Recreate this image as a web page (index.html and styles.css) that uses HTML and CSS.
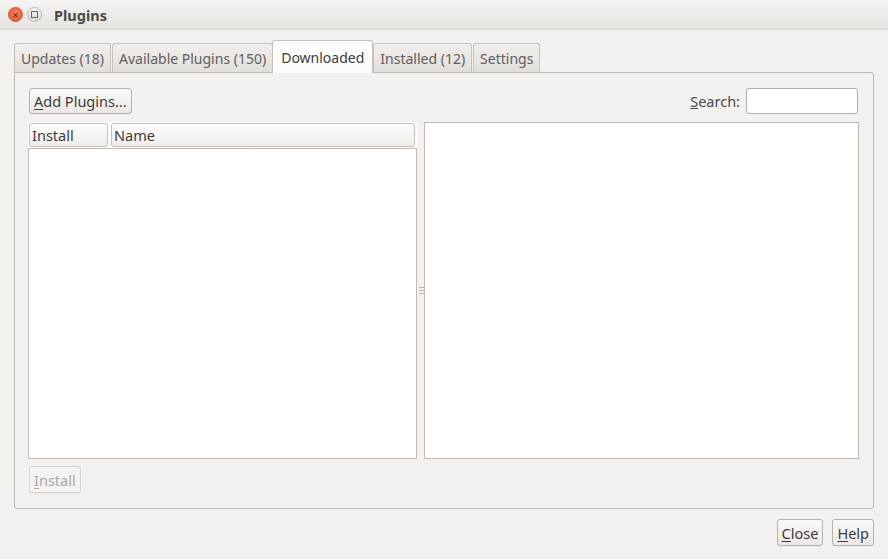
FILE: index.html
```html
<!DOCTYPE html>
<html lang="en">
<head>
    <meta charset="UTF-8">
    <title>Plugins</title>
    <link rel="stylesheet" href="styles.css">
</head>
<body>

    <div class="titlebar">
        <span class="wbtn wclose">&#215;</span>
        <span class="wbtn wmax"><i></i></span>
        <span class="wtitle">Plugins</span>
    </div>

    <div class="dialog">
        <div class="tabs">
            <div class="tab">Updates (18)</div>
            <div class="tab">Available Plugins (150)</div>
            <div class="tab active">Downloaded</div>
            <div class="tab">Installed (12)</div>
            <div class="tab">Settings</div>
        </div>

        <div class="panel">
            <div class="toolbar">
                <button class="btn"><u>A</u>dd Plugins...</button>
                <label class="search-label" for="search"><u>S</u>earch:</label>
                <input class="search" id="search" type="text">
            </div>

            <div class="panes">
                <div class="left-pane">
                    <div class="headers">
                        <div class="col col-install">Install</div>
                        <div class="col col-name">Name</div>
                    </div>
                    <div class="list"></div>
                </div>
                <div class="splitter"><span></span></div>
                <div class="right-pane"></div>
            </div>

            <div class="bottom">
                <button class="btn" disabled><u>I</u>nstall</button>
            </div>
        </div>

        <div class="actions">
            <button class="btn"><u>C</u>lose</button>
            <button class="btn"><u>H</u>elp</button>
        </div>
    </div>

</body>
</html>
```

FILE: styles.css
```css
body {
    margin: 0;
    width: 888px;
    height: 559px;
    overflow: hidden;
    background-color: #f2f1f0;
    font-family: "Noto Sans", "DejaVu Sans", sans-serif;
    font-size: 14.5px;
    color: #3c3c3c;
}

/* window title bar */
.titlebar {
    height: 30px;
    display: flex;
    align-items: center;
    background: linear-gradient(#f5f4f2, #e6e3e0);
    border-bottom: 1px solid #dcd8d3;
    box-sizing: border-box;
}
.wbtn {
    width: 15px;
    height: 15px;
    border-radius: 50%;
    display: flex;
    align-items: center;
    justify-content: center;
    box-sizing: border-box;
}
.wclose {
    margin-left: 8px;
    background: radial-gradient(circle at 50% 40%, #f5845c, #e2562a);
    border: 1px solid #c8532f;
    color: #5a2a1a;
    font-size: 11px;
    line-height: 1;
}
.wmax {
    margin-left: 4px;
    background: linear-gradient(#f6f5f3, #dcd9d5);
    border: 1px solid #bdb8b2;
}
.wmax i {
    width: 5px;
    height: 5px;
    border: 1px solid #6c6864;
}
.wtitle {
    margin-left: 12px;
    font-weight: bold;
    font-size: 14.5px;
    color: #4c4a47;
}

.dialog {
    padding: 10px 14px 0 14px;
}

/* notebook tabs */
.tabs {
    display: flex;
    align-items: flex-end;
    height: 32px;
    gap: 1px;
}
.tab {
    height: 29px;
    padding: 0 6px;
    display: flex;
    align-items: center;
    box-sizing: border-box;
    border: 1px solid #c9c1b8;
    border-bottom: none;
    border-radius: 3px 3px 0 0;
    background: linear-gradient(#f1efed, #e2deda);
    color: #5f5f5f;
    font-size: 14px;
}
.tab.active {
    height: 33px;
    margin: 0 -1px -1px -2px;
    padding: 0 8px;
    background: #fcfcfc;
    color: #3c3c3c;
    position: relative;
}

.panel {
    height: 437px;
    box-sizing: border-box;
    border: 1px solid #c3bbb1;
    border-radius: 0 3px 3px 3px;
    padding: 15px 14px 0 13px;
    display: flex;
    flex-direction: column;
}

.btn {
    font-family: inherit;
    font-size: 14.5px;
    color: #3c3c3c;
    height: 27px;
    padding: 0 4px;
    border: 1px solid #bab2a9;
    border-radius: 3px;
    background: linear-gradient(#fbfaf9, #ebe8e5);
    box-shadow: 0 1px 0 rgba(0, 0, 0, 0.04);
}
.btn u {
    text-decoration-thickness: 1px;
    text-underline-offset: 2px;
}
.btn:disabled {
    color: #a9a9a9;
    border-color: #d9d4ce;
    background: #f4f3f1;
}

.toolbar {
    display: flex;
    align-items: center;
    height: 26px;
}
.toolbar .btn {
    height: 26px;
    margin-left: 1px;
}
.search-label {
    margin-left: auto;
    margin-right: 6px;
    color: #4a4a4a;
}
.search {
    width: 112px;
    height: 26px;
    box-sizing: border-box;
    margin-right: 1px;
    border: 1px solid #b5aca2;
    border-radius: 3px;
    background: #fff;
}

.panes {
    display: flex;
    height: 337px;
    margin-top: 8px;
}
.left-pane {
    width: 390px;
    display: flex;
    flex-direction: column;
}
.headers {
    display: flex;
    gap: 3px;
    height: 26px;
    padding: 1px 3px 0 1px;
    box-sizing: border-box;
    background: #fbfbfb;
}
.col {
    height: 24px;
    box-sizing: border-box;
    padding-left: 2px;
    display: flex;
    align-items: center;
    border: 1px solid #c8c1b9;
    border-radius: 3px;
    background: linear-gradient(#fdfdfc, #efedeb);
}
.col-install {
    width: 79px;
}
.col-name {
    flex: 1;
}
.list {
    flex: 1;
    background: #fff;
    border: 1px solid #c3bbb1;
    margin-right: 1px;
}
.splitter {
    width: 6px;
    display: flex;
    align-items: center;
    justify-content: center;
}
/* three little grip lines */
.splitter span {
    width: 5px;
    height: 7px;
    background: repeating-linear-gradient(#bdb6ae 0 1px, transparent 1px 3px);
}
.right-pane {
    flex: 1;
    background: #fff;
    border: 1px solid #c3bbb1;
}

.bottom {
    margin-top: 7px;
    padding-left: 1px;
}

.actions {
    display: flex;
    justify-content: flex-end;
    gap: 9px;
    margin-top: 10px;
}
```
